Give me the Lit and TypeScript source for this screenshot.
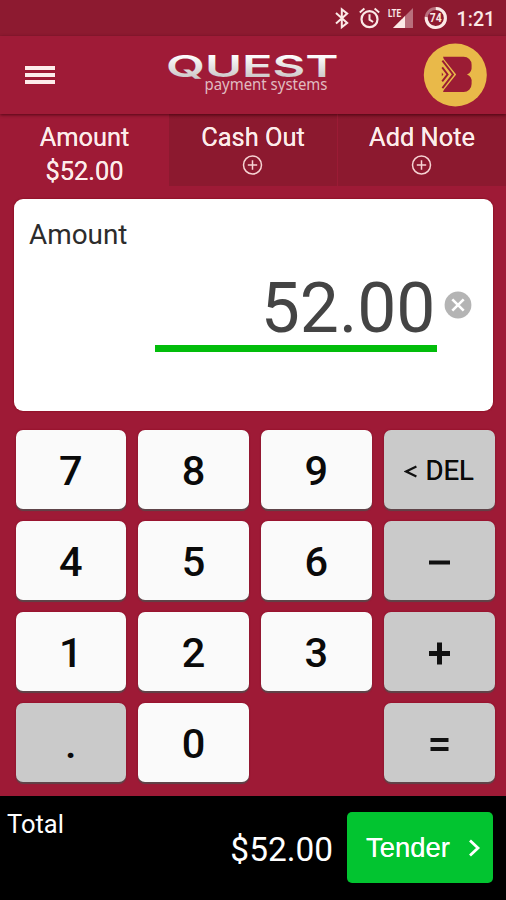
import { LitElement, html, css, svg } from "lit";
import { customElement, property } from "lit/decorators.js";
import { classMap } from "lit/directives/class-map.js";

interface Key {
  label: string;
  kind: "digit" | "fn" | "del" | "op" | "empty";
}

const KEYS: Key[] = [
  { label: "7", kind: "digit" }, { label: "8", kind: "digit" }, { label: "9", kind: "digit" }, { label: "DEL", kind: "del" },
  { label: "4", kind: "digit" }, { label: "5", kind: "digit" }, { label: "6", kind: "digit" }, { label: "−", kind: "op" },
  { label: "1", kind: "digit" }, { label: "2", kind: "digit" }, { label: "3", kind: "digit" }, { label: "+", kind: "op" },
  { label: ".", kind: "fn" }, { label: "0", kind: "digit" }, { label: "", kind: "empty" }, { label: "=", kind: "op" },
];

@customElement("status-bar")
class StatusBar extends LitElement {
  static styles = css`
    :host { display: block; height: 36px; background: #8d1a30; }
    svg { display: block; }
    .clock { font: 500 20px Roboto, sans-serif; fill: #fbe9e6; }
    .lte { font: 700 11px Roboto, sans-serif; fill: #fbe9e6; }
    .pct { font: 700 12px Roboto, sans-serif; fill: #fbe9e6; }
  `;
  render() {
    return html`<svg width="506" height="36" viewBox="0 0 506 36" fill="none">
      <path d="M336 13 347.2 22.9 341.8 27.2V9.3L347.2 13.6 336 23.6" stroke="#fbe9e6" stroke-width="2"/>
      <circle cx="369.5" cy="19.2" r="8" stroke="#fbe9e6" stroke-width="2.2"/>
      <path d="M369.5 14.2v5.4l3.6 2.4M359.8 12.4l4.6-3.8M379.2 12.4l-4.6-3.8" stroke="#fbe9e6" stroke-width="2"/>
      <path d="M413 8v20H393z" fill="#b96f7c"/>
      <path d="M405 16v12H393z" fill="#fbe9e6"/>
      <rect x="387" y="6" width="15.5" height="12.5" fill="#8d1a30"/>
      <text class="lte" x="388" y="17" textLength="13" lengthAdjust="spacingAndGlyphs">LTE</text>
      <circle cx="435.8" cy="18" r="9.6" stroke="#b96f7c" stroke-width="3"/>
      <path d="M435.8 8.4a9.6 9.6 0 1 1-9.55 8.6" stroke="#fbe9e6" stroke-width="3"/>
      <text class="pct" x="429.8" y="22.3" textLength="12" lengthAdjust="spacingAndGlyphs">74</text>
      <text class="clock" x="456.6" y="26" textLength="38.6" lengthAdjust="spacingAndGlyphs">1:21</text>
    </svg>`;
  }
}

@customElement("app-header")
class AppHeader extends LitElement {
  static styles = css`
    :host {
      display: flex; align-items: center; box-sizing: border-box; height: 78px;
      padding: 0 19px 0 25px; background: #9f1b37; position: relative;
      box-shadow: 0 1px 3px rgba(60, 0, 12, 0.75);
    }
    .menu { display: flex; flex-direction: column; gap: 3px; width: 30px; }
    .bar { height: 4px; background: #fdeceb; box-shadow: 0 0 1px #8a0f18; }
    .logo { margin-left: 106px; flex: none; overflow: visible; }
    .badge { margin-left: auto; flex: none; }
    .quest { font: 600 30.5px Inter, "Liberation Sans", sans-serif; fill: url(#metal); }
    .sub { font: 400 16.5px "Noto Sans", sans-serif; fill: #e0bcc0; }
  `;
  render() {
    return html`
      <div class="menu"><div class="bar"></div><div class="bar"></div><div class="bar"></div></div>
      <svg class="logo" width="184" height="60" viewBox="161 45 184 60">
        <defs><linearGradient id="metal" x1="0" y1="0" x2="0" y2="1">
          <stop offset=".2" stop-color="#fff"/><stop offset=".8" stop-color="#cfcaca"/>
        </linearGradient></defs>
        <text class="quest" x="166" y="77.4" textLength="172.5" lengthAdjust="spacingAndGlyphs">QUEST</text>
        <text class="sub" x="204.5" y="89.6" textLength="123" lengthAdjust="spacingAndGlyphs">payment systems</text>
      </svg>
      <svg class="badge" width="64" height="64" viewBox="423 42.7 64 64">
        <circle cx="455.3" cy="74.7" r="31.5" fill="#e9b949"/>
        <path d="M443 56.4H463.6a8 8 0 0 1 8 8v2a7.5 7.5 0 0 1-4.6 7.7 7.5 7.5 0 0 1 4.6 7.7v2a8 8 0 0 1-8 8H443l.8-2.2L456.2 74.1 443.8 58.6z" fill="#9b1c34"/>
        <path d="M442.4 60.4 453 74.1 442.4 87.8M442.2 67.1 447.6 74.1 442.2 81.1" fill="none" stroke="#9b1c34" stroke-width="1.9"/>
        <path d="M441.8 72.2v3.8l1.6-1.9z" fill="#9b1c34"/>
      </svg>`;
  }
}

@customElement("entry-tabs")
class EntryTabs extends LitElement {
  static styles = css`
    :host { display: grid; grid-template-columns: 169px 168px 1fr; grid-template-rows: 72px; height: 72px; font: 400 25.4px/34px Roboto, sans-serif; color: #fdecea; }
    .tab { display: flex; flex-direction: column; align-items: center; box-sizing: border-box; height: 72px; padding-top: 6px; text-shadow: 0 0 0.6px #fdecea; }
    .idle { background: linear-gradient(#811529, #8c192f 5px); }
    .last { border-left: 1px solid #9b1b35; }
    .plus { margin-right: 1px; }
  `;
  render() {
    const plus = svg`<g fill="none" stroke="#f6d3d3" stroke-width="1.5"><circle cx="10.5" cy="11" r="9"/><path d="M10.5 6.3v9.4M5.8 11h9.4"/></g>`;
    return html`
      <div class="tab"><span>Amount</span><span>$52.00</span></div>
      <div class="tab idle"><span>Cash Out</span><svg class="plus" width="21" height="22">${plus}</svg></div>
      <div class="tab idle last"><span>Add Note</span><svg class="plus" width="21" height="22">${plus}</svg></div>`;
  }
}

@customElement("amount-card")
class AmountCard extends LitElement {
  @property() value = "52.00";
  static styles = css`
    :host {
      display: flex; flex-direction: column; box-sizing: border-box; height: 212px; margin: 13px 13px 0 14px;
      padding: 19px 20px 0 15px; background: #fff; border-radius: 9px; box-shadow: 0 0 2px #7c0010;
      font-family: Roboto, sans-serif;
    }
    .label { font-size: 27.9px; line-height: 34px; color: #2c2c2c; }
    .row { display: flex; align-items: flex-start; margin-top: 19px; }
    .field { box-sizing: border-box; width: 281.5px; height: 81px; margin-left: 126px; padding-right: 1px; border-bottom: 7px solid #02bd0b; text-align: right; font-size: 69.6px; line-height: 75px; color: #444; }
    .clear { margin: 20px 0 0 7.5px; }
  `;
  render() {
    return html`
      <div class="label">Amount</div>
      <div class="row">
        <div class="field">${this.value}</div>
        <svg class="clear" width="28" height="28"><circle cx="14" cy="14" r="13.4" fill="#b4b4b4"/><path d="M8.3 8.3 19.7 19.7M19.7 8.3 8.3 19.7" stroke="#fff" stroke-width="2.6"/></svg>
      </div>`;
  }
}

@customElement("key-pad")
class KeyPad extends LitElement {
  static styles = css`
    :host {
      display: grid; grid-template-columns: repeat(4, 110.7px); grid-template-rows: repeat(4, 79px);
      column-gap: 12.1px; row-gap: 12px; margin: 19px 0 0 15.5px;
      font: 500 41.5px/76px Roboto, sans-serif; color: #0a0a0a;
    }
    .key { display: flex; justify-content: center; align-items: center; box-sizing: border-box; height: 79px; padding-top: 3px; background: #fafafa; border-radius: 7px; box-shadow: 0 1.5px 1px #5f4449, 0 0 2px #8c0520; }
    .grey { background: #cacaca; }
    .del { font-size: 27.5px; gap: 8px; font-weight: 400; text-shadow: 0 0 0.6px #0a0a0a; }
    .lt { display: block; }
  `;
  private face(k: Key) {
    if (k.kind === "del")
      return html`<svg class="lt" width="13" height="13" viewBox="0 0 13 13"><path d="M12.4 1.6 2.2 6.5 12.4 11.4" fill="none" stroke="#111" stroke-width="2.2"/></svg><span>${k.label}</span>`;
    if (k.kind === "op") {
      const d = k.label === "+" ? "M0 12.5H21M10.5 1.5V23.5" : k.label === "=" ? "M1.5 8H19.5M1.5 17H19.5" : "M0 12.5H21";
      const w = k.label === "+" ? 5 : 4;
      return html`<svg width="21" height="25" viewBox="0 0 21 25" role="img" aria-label=${k.label}><path d=${d} stroke="#111" stroke-width=${w}/></svg>`;
    }
    return html`<span>${k.label}</span>`;
  }
  render() {
    return KEYS.map((k) =>
      k.kind === "empty"
        ? html`<div></div>`
        : html`<div class=${classMap({ key: true, grey: k.kind !== "digit", del: k.kind === "del" })}>${this.face(k)}</div>`
    );
  }
}

@customElement("total-bar")
class TotalBar extends LitElement {
  static styles = css`
    :host { display: flex; box-sizing: border-box; height: 104px; margin-top: 14px; padding: 0 13px 0 7px; background: #000; color: #fff; font-family: Roboto, sans-serif; }
    .label { padding-top: 12px; font-size: 25.5px; line-height: 32px; }
    .sum { margin-left: auto; padding-top: 33px; font-size: 33.4px; line-height: 42px; }
    .tender { display: flex; align-items: center; box-sizing: border-box; width: 146px; height: 71px; margin: 16px 0 0 14px; padding: 0 12px 0 19px; border-radius: 5px; background: #02c430; }
    .word { font: 400 27.4px/34px "Liberation Sans", sans-serif; text-shadow: 0 0 0.6px #fff; }
    .chev { margin-left: auto; }
  `;
  render() {
    return html`
      <div class="label">Total</div>
      <div class="sum">$52.00</div>
      <div class="tender"><span class="word">Tender</span>
        <svg class="chev" width="13" height="18" viewBox="0 0 13 18"><path d="M2 1.5 10 9 2 16.5" fill="none" stroke="#fff" stroke-width="2.8"/></svg>
      </div>`;
  }
}

@customElement("app-root")
class AppRoot extends LitElement {
  static styles = css`
    :host { display: block; width: 506px; height: 900px; overflow: hidden; background: #9e1a36; }
  `;
  render() {
    return html`<status-bar></status-bar><app-header></app-header><entry-tabs></entry-tabs>
      <amount-card></amount-card><key-pad></key-pad><total-bar></total-bar>`;
  }
}
